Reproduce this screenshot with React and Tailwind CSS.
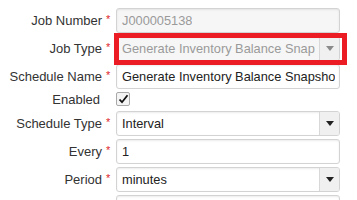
import React from "react";

const font = { fontFamily: '"Liberation Sans", Arial, sans-serif' };

function Label({ text, required = true }) {
  return (
    <div className="w-[116px] shrink-0 flex justify-end items-center pr-[4px] text-[13px] text-[#333]">
      <span>{text}</span>
      {required ? (
        <span className="ml-[4px] w-[6px] text-[11px] text-[#e0262c] leading-none mb-[3px]">*</span>
      ) : (
        <span className="w-[8px]" />
      )}
    </div>
  );
}

function Caret({ muted }) {
  return (
    <svg width="8" height="5" viewBox="0 0 8 5">
      <path d="M0 0 L8 0 L4 5 Z" fill={muted ? "#8a8a8a" : "#222"} />
    </svg>
  );
}

function Field({ value, disabled, select }) {
  return (
    <div
      className={`w-[224px] h-[25px] flex items-stretch border border-[#d3d3d3] rounded-[3px] shadow-[inset_0_1px_2px_rgba(0,0,0,0.08)] overflow-hidden ${
        disabled ? "bg-[#f6f6f6]" : "bg-white"
      }`}
    >
      <div
        className={`flex-1 flex items-center pl-[5px] pr-[4px] text-[12.8px] whitespace-nowrap overflow-hidden ${
          disabled ? "text-[#9a9a9a]" : "text-[#222]"
        }`}
      >
        <span className="overflow-hidden">{value}</span>
      </div>
      {select && (
        <div className="w-[20px] shrink-0 flex items-center justify-center border-l border-[#d8d8d8] bg-[#f0f0f0]">
          <Caret muted={disabled} />
        </div>
      )}
    </div>
  );
}

export default function App() {
  return (
    <div className="w-[357px] h-[200px] bg-white overflow-hidden pt-[8px]" style={font}>
      <div className="flex flex-col gap-[3px]">
        <div className="flex">
          <Label text="Job Number" />
          <Field value="J000005138" disabled />
        </div>
        <div className="flex">
          <Label text="Job Type" />
          <div className="relative">
            <Field value="Generate Inventory Balance Snapshot" disabled select />
            <div className="absolute left-[-2px] right-[-7px] top-[-3px] bottom-[-4px] border-[5px] border-[#ec1c24] pointer-events-none" />
          </div>
        </div>
        <div className="flex">
          <Label text="Schedule Name" />
          <Field value="Generate Inventory Balance Snapshot" />
        </div>
        <div className="flex h-[16px]">
          <div className="w-[116px] shrink-0 flex justify-end items-center pr-[16px] text-[13px] text-[#333]">
            Enabled
          </div>
          <div className="w-[14px] h-[14px] border border-[#a9a9a9] rounded-[2px] bg-[#f4f4f4] flex items-center justify-center">
            <svg width="11" height="10" viewBox="0 0 11 10">
              <path d="M1.5 5.5 L4 8.2 L9.5 1.2" fill="none" stroke="#111" strokeWidth="1.8" />
            </svg>
          </div>
        </div>
        <div className="flex">
          <Label text="Schedule Type" />
          <Field value="Interval" select />
        </div>
        <div className="flex">
          <Label text="Every" />
          <Field value="1" />
        </div>
        <div className="flex">
          <Label text="Period" />
          <Field value="minutes" select />
        </div>
        <div className="flex">
          <Label text="" required={false} />
          <Field value="" />
        </div>
      </div>
    </div>
  );
}
